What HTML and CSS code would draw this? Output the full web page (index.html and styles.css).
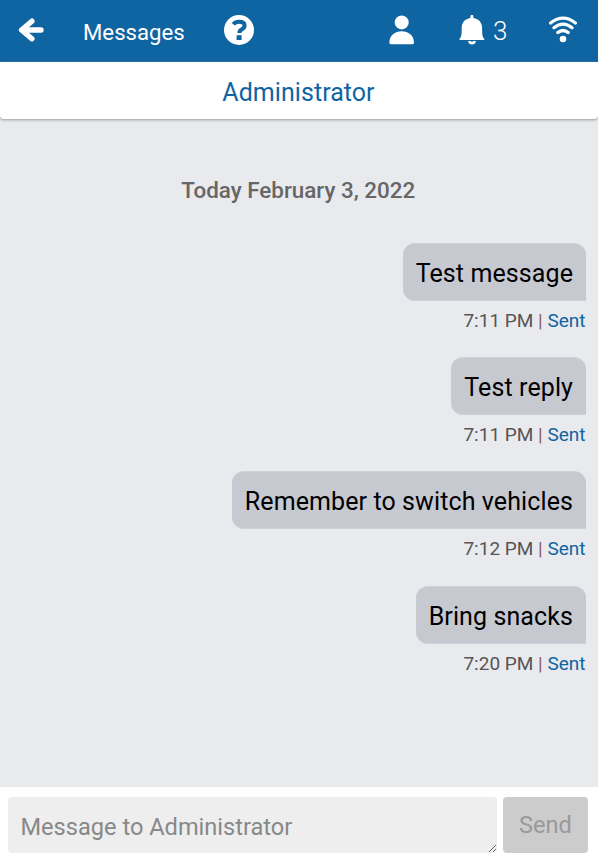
FILE: index.html
```html
<!DOCTYPE html>
<html lang="en"><head><meta charset="utf-8"><title>Messages</title><link rel="stylesheet" href="styles.css"></head>
<body>
<header class="bar">
<svg class="back" viewBox="0 0 26 24"><path d="M13.900 3.200 3.600 12l10.300 8.800M5 12h18" fill="none" stroke="#fff" stroke-width="5.400" stroke-linecap="round" stroke-linejoin="round"/></svg>
<h1 class="title">Messages</h1>
<svg class="help" viewBox="0 0 30 30"><circle cx="15" cy="15" r="15" fill="#fff"/><path d="M9.300 9.200q2-2.400 5.700-2.400 5.600 0 5.600 3.800 0 2.300-2.700 3.700-2.500 1.400-2.500 3.700" fill="none" stroke="#0f64a2" stroke-width="4"/><path d="M12.600 20.200h5v4.800h-5z" fill="#0f64a2"/></svg>
<svg class="user" viewBox="0 0 26 30"><circle cx="12.700" cy="7.400" r="7" fill="#fff"/><path d="M1.700 29.200Q.4 29.200.4 27.400C.4 20.600 6 16.300 12.700 16.300S25 20.600 25 27.400q0 1.800-1.400 1.800z" fill="#fff"/></svg>
<svg class="bell" viewBox="0 0 26 30"><path d="M11.400 3V1.400a1.500 1.500 0 0 1 3 0V3c5.500.8 8.700 4.500 8.700 10 0 6.500.3 9.200 2.200 10.800V25H.5v-1.200C2.400 22.200 2.700 19.500 2.700 13c0-5.500 3.200-9.200 8.700-10z" fill="#fff"/><path d="M9 26q.8 3.600 4 3.600T17 26h-2.400q-1.600 1.500-3.200 0z" fill="#fff"/></svg>
<span class="count">3</span>
<svg class="wifi" viewBox="0 0 30 27"><path d="M2.600 7q12.400-9.600 24.800 0M6 11.800q9-7.200 18 0M9.800 16.600q5.200-4.200 10.400 0" fill="none" stroke="#fff" stroke-width="3.200" stroke-linecap="round"/><circle cx="15" cy="23" r="3.300" fill="#fff"/></svg>
</header>
<div class="contact">Administrator</div>
<main class="thread">
<div class="date">Today February 3, 2022</div>
<article class="message"><p class="bubble">Test message</p><p class="meta">7:11 PM <i class="divider">|</i> <b class="status">Sent</b></p></article>
<article class="message"><p class="bubble">Test reply</p><p class="meta">7:11 PM <i class="divider">|</i> <b class="status">Sent</b></p></article>
<article class="message"><p class="bubble">Remember to switch vehicles</p><p class="meta">7:12 PM <i class="divider">|</i> <b class="status">Sent</b></p></article>
<article class="message last"><p class="bubble">Bring snacks</p><p class="meta">7:20 PM <i class="divider">|</i> <b class="status">Sent</b></p></article>
</main>
<footer class="composer"><textarea class="input" placeholder="Message to Administrator"></textarea><button class="send" disabled>Send</button></footer>
</body></html>
```
FILE: styles.css
```css
*{box-sizing:border-box}
body{margin:0;width:598px;height:862px;display:flex;flex-direction:column;overflow:hidden;background:#e9eaee;font-family:Roboto,sans-serif}
svg{display:block;flex:none}
.bar{height:62px;flex:none;background:#0f64a2;color:#fff;display:flex;align-items:center;padding:0 20px 2px 18px}
.back{width:26px;height:24px}
.title{margin:4px 0 0 39px;width:102px;font-size:22.2px;font-weight:400;white-space:nowrap}
.help{width:30px;height:30px;margin-left:39px}
.user{width:26px;height:30px;margin-left:135px}
.bell{width:26px;height:30px;margin-left:44px}
.count{font-size:26px;font-weight:300;margin:2px 0 0 8px;width:15px}
.wifi{width:30px;height:27px;margin:0 0 2px 40px}
.contact{height:57px;flex:none;background:#fff;color:#0f64a2;text-align:center;font-size:25px;line-height:62px;padding-right:1px;letter-spacing:.05px;border-radius:0 0 4px 4px;box-shadow:0 1px 3px #999}
.thread{flex:1;padding:55px 12.500px 0 0}
.date{text-align:center;font-size:22.400px;font-weight:500;line-height:32px;color:#666;padding-left:11px;margin-bottom:37px}
.message{display:flex;flex-direction:column;align-items:flex-end;height:114px}
.bubble{margin:0;height:58px;padding:0 12.500px 0 13px;border:1px solid #cfd1d8;border-width:1px 0;border-radius:12px 12px 0 12px;background:#c7c9d1;color:#000;font-size:25px;line-height:60px;letter-spacing:.1px}
.last{margin-top:1px}
.meta{margin:8px 0 0;font-size:19px;line-height:24px;color:#555}
.divider{font-style:normal;color:#865c5c}
.status{font-weight:400;color:#0f64a2}
.composer{height:75px;flex:none;background:#fff;display:flex;gap:6px;padding:10px 10px 9px 8px}
.input{width:489px;height:56px;border:0;border-radius:4px;background:#eee;padding:15px 13px 15px 12.500px;font:23.600px/30px Roboto,sans-serif}
.input::placeholder{color:#888}
.send{width:85px;height:56px;border:0;border-radius:4px;background:#ccc;color:#999;font:23.600px Roboto,sans-serif;padding:0 0 1px}
```
